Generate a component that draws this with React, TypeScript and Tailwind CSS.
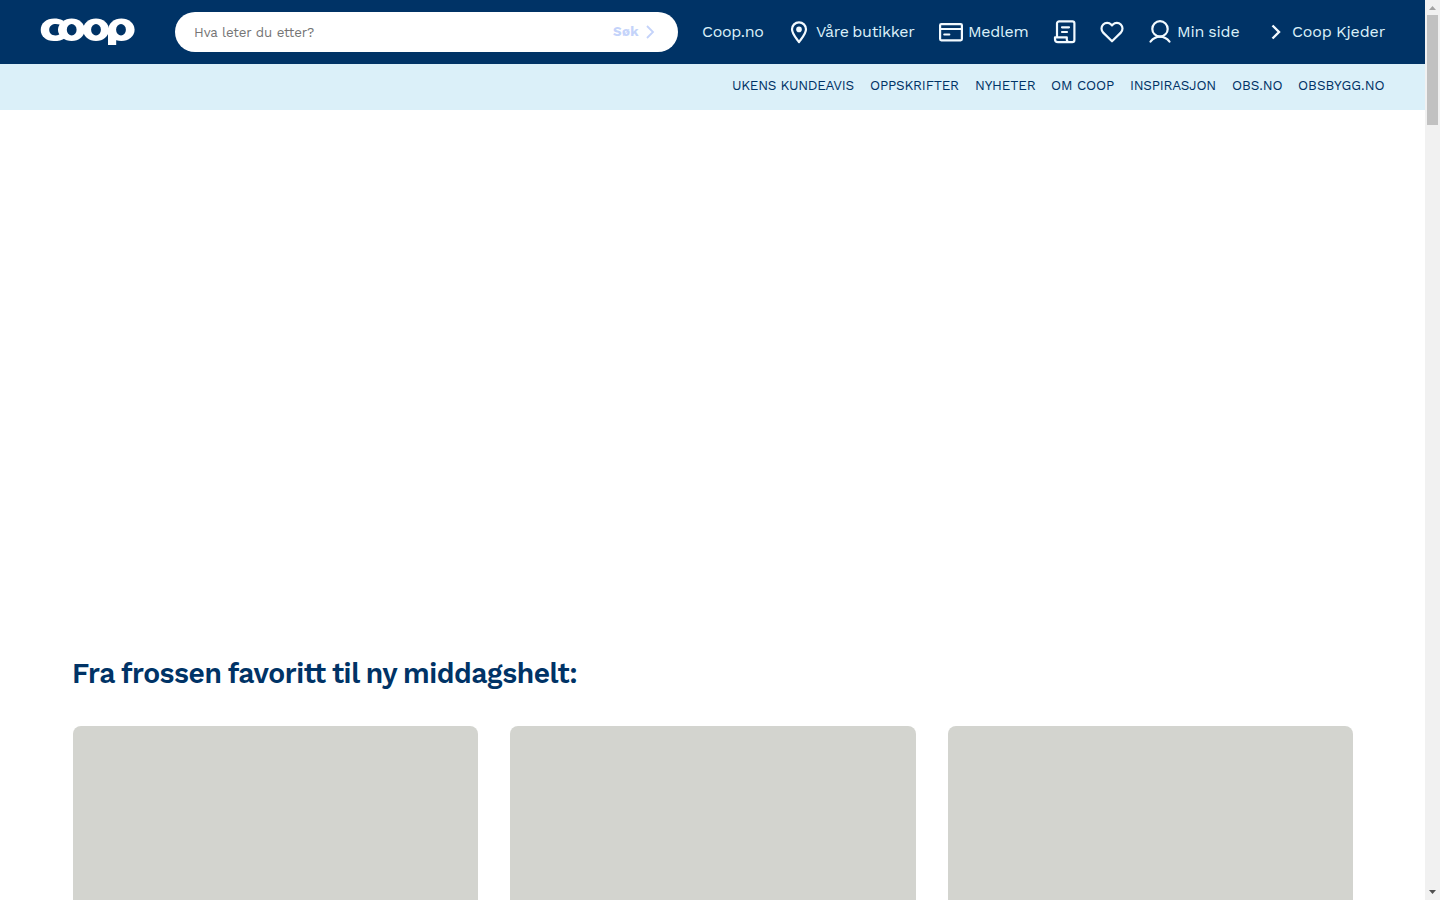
import type { ReactNode } from "react";

function Logo() {
  return (
    <svg width="95" height="28" viewBox="0 0 95 28" aria-label="coop" className="shrink-0">
      <g fill="#fff">
        <path d="M23 2.6C20 0.8 17.5 0.4 14.3 0.4C6.4 0.4 0.7 5 0.7 11.8C0.7 18.4 6 23 13.8 23C18.5 23 22 22.2 25 20.2Z" />
        <ellipse cx="31.7" cy="11.7" rx="13" ry="11.3" />
        <ellipse cx="56" cy="11.7" rx="13" ry="11.3" />
        <ellipse cx="81.4" cy="11.7" rx="13.2" ry="11.3" />
        <path d="M68 10h8.2v17H68z" />
      </g>
      <g fill="#003366">
        <path d="M19.6 6.6C15 5 9.2 6.2 9.2 11.8C9.2 17.3 15 18.6 19.3 16.6C17.4 13.7 17.5 9.5 19.6 6.6Z" />
        <ellipse cx="31.7" cy="11.7" rx="4.9" ry="5.7" />
        <ellipse cx="56" cy="11.7" rx="4.9" ry="5.7" />
        <ellipse cx="81" cy="11.7" rx="4.9" ry="5.7" />
      </g>
    </svg>
  );
}

function Icon({ children }: { children: ReactNode }) {
  return (
    <svg width="24" height="24" viewBox="0 0 24 24" fill="none" stroke="currentColor" strokeWidth="2.2" strokeLinecap="round" strokeLinejoin="round" className="shrink-0 text-[#f2faff]">
      {children}
    </svg>
  );
}

const links = [
  { label: "UKENS KUNDEAVIS", box: "w-[122px] tracking-[-0.3px]" },
  { label: "OPPSKRIFTER", box: "w-[89px] tracking-[-0.2px]" },
  { label: "NYHETER", box: "w-[60px] tracking-[-0.15px]" },
  { label: "OM COOP", box: "w-[63px] tracking-[-0.1px]" },
  { label: "INSPIRASJON", box: "w-[86px] tracking-[-0.27px]" },
  { label: "OBS.NO", box: "w-[50px] tracking-[-0.1px]" },
  { label: "OBSBYGG.NO", box: "w-[87px]" },
];

export default function App() {
  return (
    <div className="flex h-[900px] w-[1440px] overflow-hidden bg-white font-['Work_Sans','Inter',sans-serif] [font-variant-ligatures:none]">
      <div className="flex w-[1425px] shrink-0 flex-col">
        <header className="flex h-16 shrink-0 items-center bg-[#003366] pl-10 text-[16px] text-[#dbf0f9]">
          <Logo />
          <div className="ml-10 flex h-10 w-[503px] shrink-0 items-center justify-between rounded-full bg-white pr-[22px] pl-[19px]">
            <span className="pt-px text-[13.33px] tracking-[-0.1px] text-[#757575]">Hva leter du etter?</span>
            <span className="flex items-center gap-[5px] text-[13.33px] font-bold tracking-[0.4px] text-[#c4d3fa]">
              Søk
              <svg width="12" height="14" viewBox="0 0 12 14" fill="none" stroke="currentColor" strokeWidth="1.8" className="mt-px">
                <path d="M3 1L9 7L3 13" />
              </svg>
            </span>
          </div>
          <nav className="ml-6 flex items-center whitespace-nowrap">
            <a className="w-[85px] tracking-[-0.3px]">Coop.no</a>
            <a className="flex w-[152px] items-center gap-[5px]">
              <Icon>
                <path d="M12 22C9.5 18.5 5 14 5 9.3A7 7 0 0 1 19 9.3C19 14 14.5 18.5 12 22Z" />
                <circle cx="12" cy="9.4" r="2.8" fill="currentColor" stroke="none" />
              </Icon>
              <span className="tracking-[-0.31px] [word-spacing:-1.5px]">Våre butikker</span>
            </a>
            <a className="flex w-[114px] items-center gap-[5px]">
              <Icon>
                <rect x="1.1" y="4.1" width="21.8" height="16.2" rx="1.2" />
                <path d="M1 9h22M5.3 14.5h5" />
              </Icon>
              <span className="tracking-[-0.28px]">Medlem</span>
            </a>
            <a className="w-[47px]">
              <Icon>
                <path d="M4 16V3.5A2.2 2.2 0 0 1 6.2 1.3H19.4A2 2 0 0 1 21.4 3.3V20A2.2 2.2 0 0 1 19.2 22.2H5A3 3 0 0 1 2 19.2V17.3H13.8V19.5A2.7 2.7 0 0 0 16.5 22.2M9 7.3h7M9 12h5" />
              </Icon>
            </a>
            <a className="w-12">
              <Icon>
                <path d="M12 21.3L3.2 12.6A5.7 5.7 0 0 1 3.2 4.5A5.5 5.5 0 0 1 11.1 4.5L12 5.4L12.9 4.5A5.5 5.5 0 0 1 20.8 4.5A5.7 5.7 0 0 1 20.8 12.6Z" />
              </Icon>
            </a>
            <a className="flex w-[116px] items-center gap-[5px]">
              <Icon>
                <circle cx="12" cy="8.9" r="7.7" />
                <path d="M2.5 21.7C5.3 18 8 16.6 12 16.6S18.7 18 21.5 21.7" />
              </Icon>
              <span className="tracking-[-0.2px] [word-spacing:-1.2px]">Min side</span>
            </a>
            <a className="flex items-center gap-[5px]">
              <Icon>
                <path d="M8.5 5.5L15 12L8.5 18.5" strokeWidth="2.4" strokeLinecap="butt" strokeLinejoin="miter" />
              </Icon>
              <span className="-ml-px tracking-[-0.12px] [word-spacing:-1px]">Coop Kjeder</span>
            </a>
          </nav>
        </header>
        <nav className="flex h-[46px] shrink-0 items-center justify-end gap-4 bg-[#dbf0f9] pr-10 pb-[3px] text-[13.5px] whitespace-nowrap text-[#003366]">
          {links.map(({ label, box }) => (
            <a key={label} className={box}>{label}</a>
          ))}
        </nav>
        <main className="px-[73px] pt-[542px]">
          <h2 className="-ml-px h-[42px] w-max origin-left scale-x-[0.94] text-[30px] leading-[42px] font-semibold tracking-[-0.47px] whitespace-nowrap text-[#003366] [word-spacing:-1.7px]">
            Fra frossen favoritt til ny middagshelt:
          </h2>
          <div className="mt-8 grid w-[1280px] grid-cols-3 gap-8">
            <div className="h-[174px] rounded-t-lg bg-[#d3d4cf]" />
            <div className="h-[174px] rounded-t-lg bg-[#d3d4cf]" />
            <div className="h-[174px] rounded-t-lg bg-[#d3d4cf]" />
          </div>
        </main>
      </div>
      <div className="flex w-[15px] shrink-0 flex-col items-center justify-between bg-[#f1f1f1]">
        <div className="flex flex-col items-center">
          <svg width="15" height="15"><path d="M4 10L7.5 6L11 10Z" fill="#a3a3a3" /></svg>
          <div className="h-[110px] w-[11px] bg-[#c1c1c1]" />
        </div>
        <svg width="15" height="15"><path d="M4 5L7.5 9L11 5Z" fill="#505050" /></svg>
      </div>
    </div>
  );
}
